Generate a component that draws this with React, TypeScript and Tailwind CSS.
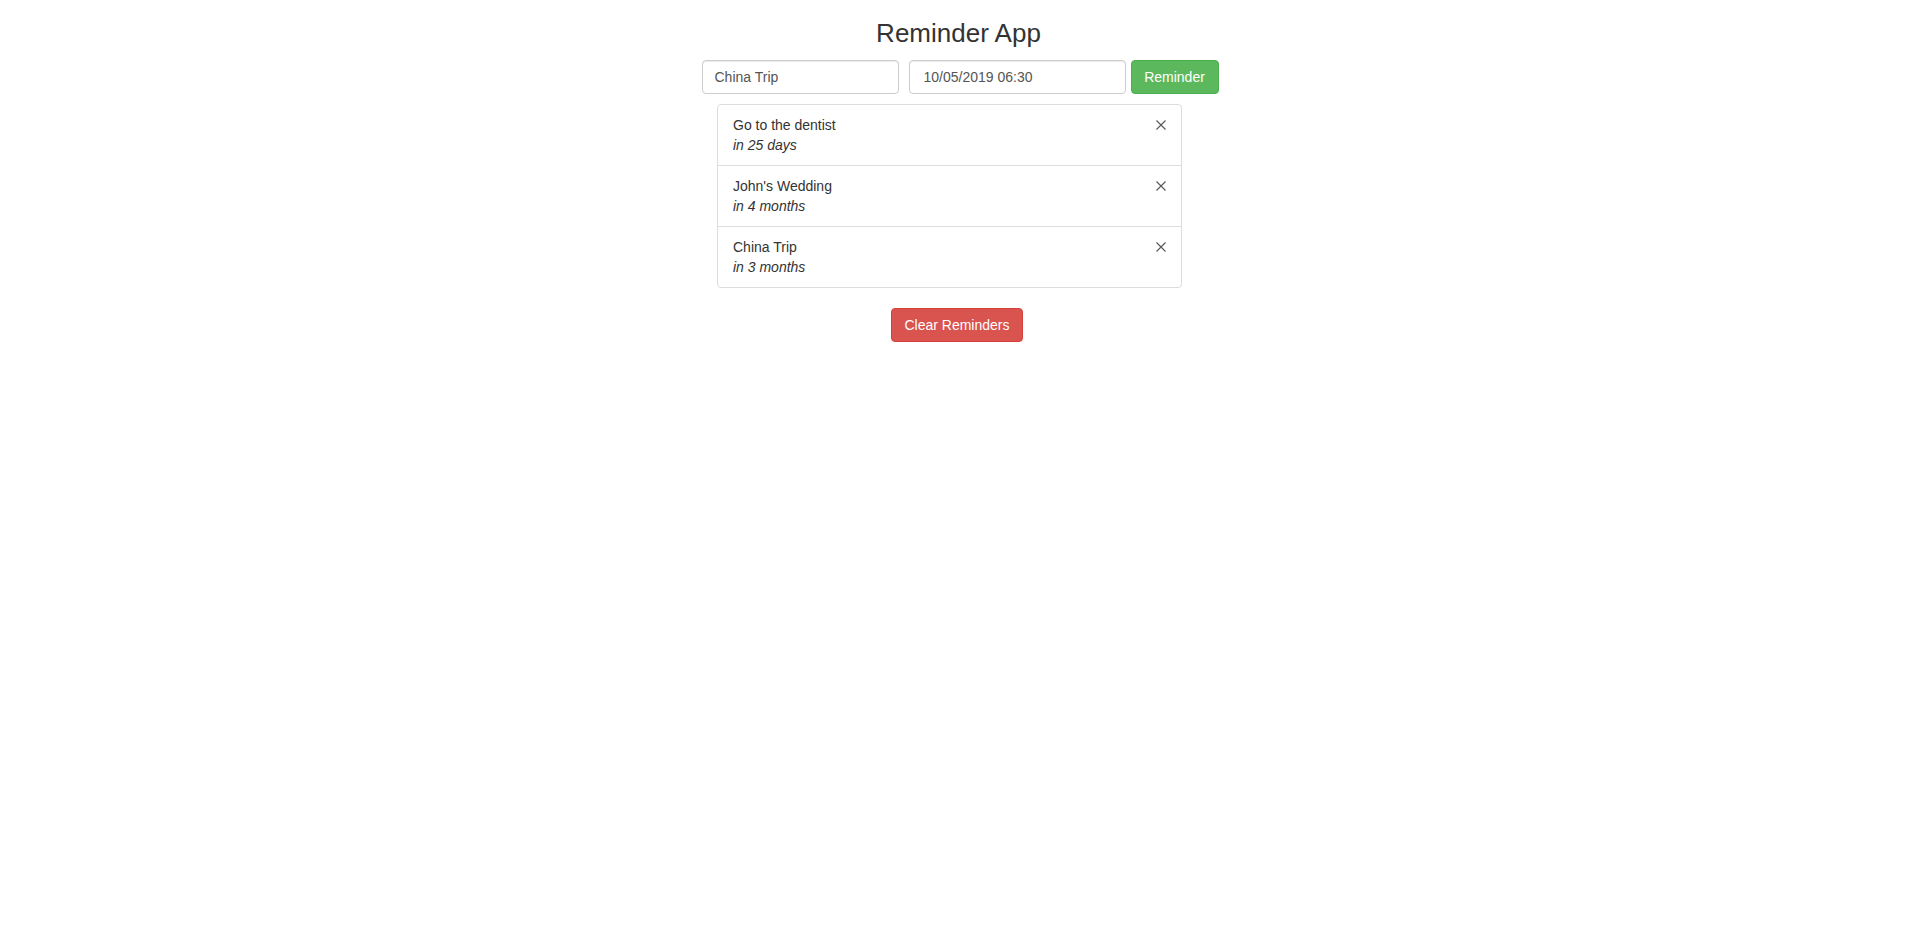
import { useState } from 'react'

interface Reminder {
  id: number
  text: string
  due: string
}

const initialReminders: Reminder[] = [
  { id: 1, text: 'Go to the dentist', due: 'in 25 days' },
  { id: 2, text: "John's Wedding", due: 'in 4 months' },
  { id: 3, text: 'China Trip', due: 'in 3 months' },
]

function CloseIcon() {
  return (
    <svg width="10" height="10" viewBox="0 0 10 10" className="block">
      <path d="M0.5 0.5 L9.5 9.5 M9.5 0.5 L0.5 9.5" stroke="#555" strokeWidth="1.1" fill="none" />
    </svg>
  )
}

export default function App() {
  const [reminders, setReminders] = useState<Reminder[]>(initialReminders)
  const [text, setText] = useState('China Trip')
  const [dueDate, setDueDate] = useState('10/05/2019 06:30')

  const removeReminder = (id: number) => {
    setReminders(reminders.filter((r) => r.id !== id))
  }

  return (
    <div className="min-h-screen bg-white font-['Liberation_Sans',Arial,sans-serif] text-sm leading-5 text-[#333]">
      <div className="flex flex-col items-center pt-[19px]">
        <h1 className="text-[26px] leading-[1.1] font-normal text-[#333]">Reminder App</h1>

        {/* Form */}
        <div className="mt-[12px] ml-[3px] flex items-center">
          <input
            value={text}
            onChange={(e) => setText(e.target.value)}
            className="h-[34px] w-[197px] rounded-[4px] border border-[#ccc] px-3 py-[6px] text-sm text-[#555] shadow-[inset_0_1px_1px_rgba(0,0,0,0.075)] outline-none"
          />
          <input
            value={dueDate}
            onChange={(e) => setDueDate(e.target.value)}
            className="ml-[10px] h-[34px] w-[217px] rounded-[4px] border border-[#ccc] pl-[14px] pr-3 py-[6px] text-sm text-[#555] shadow-[inset_0_1px_1px_rgba(0,0,0,0.075)] outline-none"
          />
          <button className="ml-[5px] h-[34px] w-[88px] rounded-[4px] border border-[#4cae4c] bg-[#5cb85c] text-sm text-white">
            Reminder
          </button>
        </div>

        {/* Reminder list */}
        <ul className="mt-[10px] -ml-[18px] w-[465px] divide-y divide-[#ddd] rounded-[4px] border border-[#ddd] bg-white">
          {reminders.map((reminder) => (
            <li key={reminder.id} className="flex items-start justify-between px-[15px] py-[10px]">
              <div>
                <div>{reminder.text}</div>
                <div className="italic">{reminder.due}</div>
              </div>
              <button onClick={() => removeReminder(reminder.id)} className="mt-[5px]">
                <CloseIcon />
              </button>
            </li>
          ))}
        </ul>

        <button
          onClick={() => setReminders([])}
          className="mt-[20px] -ml-[3px] h-[34px] rounded-[4px] border border-[#d43f3a] bg-[#d9534f] px-3 text-sm text-white"
        >
          Clear Reminders
        </button>
      </div>
    </div>
  )
}
